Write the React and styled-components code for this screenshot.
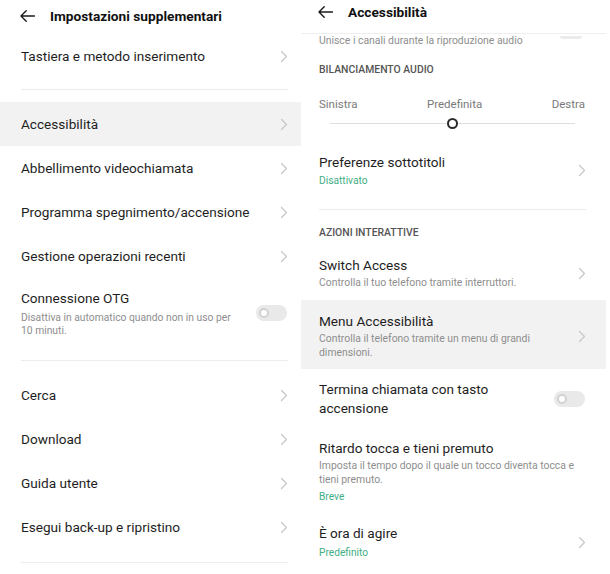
import React from "react";
import styled, { createGlobalStyle } from "styled-components";

const GlobalStyle = createGlobalStyle`
  html, body { margin: 0; padding: 0; background: #fff; }
  body { font-family: Roboto, "Noto Sans", Arial, sans-serif; color: #1e1e1e; }
  * { box-sizing: border-box; }
`;

const Page = styled.div`
  display: flex;
  width: 610px;
  height: 574px;
  overflow: hidden;
  background: #fff;
`;

const Panel = styled.div`
  display: flex;
  flex-direction: column;
  width: ${(p) => p.$width}px;
  flex: none;
  padding-left: ${(p) => p.$left}px;
`;

const Header = styled.div`
  display: flex;
  align-items: center;
  gap: 15px;
  height: ${(p) => p.$height}px;
  padding: 0 0 ${(p) => p.$pb}px ${(p) => p.$pl}px;
  margin-left: ${(p) => -p.$left}px;
  border-bottom: ${(p) => (p.$border ? "1px solid #efefef" : "none")};
  flex: none;
`;

const HeaderTitle = styled.div`
  font-size: 13.7px;
  font-weight: 700;
  color: #111;
  line-height: 18px;
`;

const Row = styled.div`
  display: flex;
  align-items: center;
  justify-content: space-between;
  min-height: ${(p) => p.$min || 0}px;
  padding: ${(p) => p.$pt || 0}px ${(p) => p.$pr}px ${(p) => p.$pb || 0}px
    ${(p) => p.$left}px;
  margin-left: ${(p) => -p.$left}px;
  background: ${(p) => (p.$active ? "#f2f2f2" : "transparent")};
  flex: none;
`;

const RowText = styled.div`
  display: flex;
  flex-direction: column;
  flex: 1;
  min-width: 0;
  padding-right: ${(p) => p.$gap || 0}px;
`;

const Title = styled.div`
  font-size: 13.6px;
  line-height: ${(p) => p.$lh || 18}px;
  color: #1e1e1e;
`;

const Sub = styled.div`
  font-size: ${(p) => p.$size || 10.4}px;
  line-height: ${(p) => p.$lh || 14}px;
  color: #8e8e8e;
  margin-top: ${(p) => p.$mt ?? 2}px;
`;

const Value = styled.div`
  font-size: 10.2px;
  line-height: 15px;
  color: #3fae86;
  margin-top: ${(p) => p.$mt ?? 2}px;
`;

const Divider = styled.div`
  height: 1px;
  background: #ececec;
  margin: ${(p) => p.$mt}px ${(p) => p.$mr}px ${(p) => p.$mb}px 0;
  flex: none;
`;

const SectionLabel = styled.div`
  font-size: 10.4px;
  font-weight: 500;
  line-height: 14px;
  color: #555;
  margin-top: ${(p) => p.$mt}px;
  flex: none;
`;

const ToggleTrack = styled.div`
  width: 31px;
  height: 16px;
  border-radius: 8px;
  background: #e9e9e9;
  display: flex;
  align-items: center;
  padding-left: 3px;
  flex: none;
`;

const ToggleKnob = styled.div`
  width: 10px;
  height: 10px;
  border-radius: 50%;
  background: #fff;
  border: 2px solid #d2d2d2;
`;

const PartialToggle = styled.div`
  width: 22px;
  height: 3px;
  background: #ebebeb;
  border-radius: 0 0 4px 4px;
  align-self: flex-start;
  margin-top: 2px;
  margin-right: 4px;
  flex: none;
`;

const SliderLabels = styled.div`
  display: flex;
  justify-content: space-between;
  margin: 19px 21px 0 0;
  font-size: 11.5px;
  line-height: 16px;
  color: #7a7a7a;
  flex: none;
`;

const SliderTrack = styled.div`
  position: relative;
  height: 12px;
  margin: 5px 31px 14px 11px;
  flex: none;
  &::before {
    content: "";
    position: absolute;
    left: 0;
    right: 0;
    top: 6px;
    height: 1px;
    background: #dedede;
  }
`;

const SliderKnob = styled.div`
  position: absolute;
  left: 50%;
  top: 1px;
  width: 11px;
  height: 11px;
  margin-left: -6px;
  border-radius: 50%;
  background: #fff;
  border: 2px solid #2a2a2a;
`;

const Chevron = () => (
  <svg width="8" height="13" viewBox="0 0 8 13" style={{ flex: "none" }}>
    <polyline
      points="1.5,1.5 6.5,6.5 1.5,11.5"
      fill="none"
      stroke="#c6c6c6"
      strokeWidth="1.2"
      strokeLinecap="round"
      strokeLinejoin="round"
    />
  </svg>
);

const BackArrow = () => (
  <svg width="15" height="12" viewBox="0 0 15 12" style={{ flex: "none" }}>
    <path
      d="M14.5 6 H1 M6.2 0.8 L1 6 L6.2 11.2"
      fill="none"
      stroke="#1a1a1a"
      strokeWidth="1.4"
      strokeLinecap="round"
      strokeLinejoin="round"
    />
  </svg>
);

const Toggle = () => (
  <ToggleTrack>
    <ToggleKnob />
  </ToggleTrack>
);

const L = 21;
const LR = 13;

const SimpleLeft = ({ label, active }) => (
  <Row $left={L} $pr={LR} $min={44} $active={active}>
    <RowText>
      <Title>{label}</Title>
    </RowText>
    <Chevron />
  </Row>
);

const R = 18;
const RR = 20;

export default function App() {
  return (
    <>
      <GlobalStyle />
      <Page>
        <Panel $width={301} $left={L}>
          <Header $height={34} $pb={2} $pl={20} $left={L}>
            <BackArrow />
            <HeaderTitle>Impostazioni supplementari</HeaderTitle>
          </Header>
          <SimpleLeft label="Tastiera e metodo inserimento" />
          <Divider $mt={11} $mb={12} $mr={LR} />
          <SimpleLeft label="Accessibilità" active />
          <SimpleLeft label="Abbellimento videochiamata" />
          <SimpleLeft label="Programma spegnimento/accensione" />
          <SimpleLeft label="Gestione operazioni recenti" />
          <Row $left={L} $pr={LR + 1} $pt={11} $pb={11}>
            <RowText $gap={20}>
              <Title>Connessione OTG</Title>
              <Sub $size={10.3} $lh={13} $mt={4}>
                Disattiva in automatico quando non in uso per 10 minuti.
              </Sub>
            </RowText>
            <Toggle />
          </Row>
          <Divider $mt={12} $mb={12} $mr={LR} />
          <SimpleLeft label="Cerca" />
          <SimpleLeft label="Download" />
          <SimpleLeft label="Guida utente" />
          <SimpleLeft label="Esegui back-up e ripristino" />
          <Divider $mt={13} $mb={0} $mr={LR} />
        </Panel>

        <Panel $width={305} $left={R}>
          <Header $height={34} $pb={10} $pl={17} $left={R} $border>
            <BackArrow />
            <HeaderTitle>Accessibilità</HeaderTitle>
          </Header>
          <Row $left={R} $pr={RR}>
            <Sub $mt={0}>Unisce i canali durante la riproduzione audio</Sub>
            <PartialToggle />
          </Row>
          <SectionLabel $mt={15}>BILANCIAMENTO AUDIO</SectionLabel>
          <SliderLabels>
            <span>Sinistra</span>
            <span>Predefinita</span>
            <span>Destra</span>
          </SliderLabels>
          <SliderTrack>
            <SliderKnob />
          </SliderTrack>
          <Row $left={R} $pr={RR} $pt={10} $pb={10}>
            <RowText>
              <Title>Preferenze sottotitoli</Title>
              <Value>Disattivato</Value>
            </RowText>
            <Chevron />
          </Row>
          <Divider $mt={11} $mb={0} $mr={RR} />
          <SectionLabel $mt={16}>AZIONI INTERATTIVE</SectionLabel>
          <Row $left={R} $pr={RR} $pt={16} $pb={10}>
            <RowText $gap={20}>
              <Title>Switch Access</Title>
              <Sub>Controlla il tuo telefono tramite interruttori.</Sub>
            </RowText>
            <Chevron />
          </Row>
          <Row $left={R} $pr={RR} $pt={12} $pb={9} $active>
            <RowText $gap={24}>
              <Title>Menu Accessibilità</Title>
              <Sub>Controlla il telefono tramite un menu di grandi dimensioni.</Sub>
            </RowText>
            <Chevron />
          </Row>
          <Row $left={R} $pr={RR + 1} $pt={11} $pb={11}>
            <RowText $gap={50}>
              <Title $lh={19}>Termina chiamata con tasto accensione</Title>
            </RowText>
            <Toggle />
          </Row>
          <Row $left={R} $pr={RR} $pt={10} $pb={10}>
            <RowText $gap={6}>
              <Title>Ritardo tocca e tieni premuto</Title>
              <Sub>
                Imposta il tempo dopo il quale un tocco diventa tocca e tieni
                premuto.
              </Sub>
              <Value>Breve</Value>
            </RowText>
          </Row>
          <Row $left={R} $pr={RR} $pt={10} $pb={10}>
            <RowText>
              <Title>È ora di agire</Title>
              <Value $mt={3}>Predefinito</Value>
            </RowText>
            <Chevron />
          </Row>
        </Panel>
      </Page>
    </>
  );
}
